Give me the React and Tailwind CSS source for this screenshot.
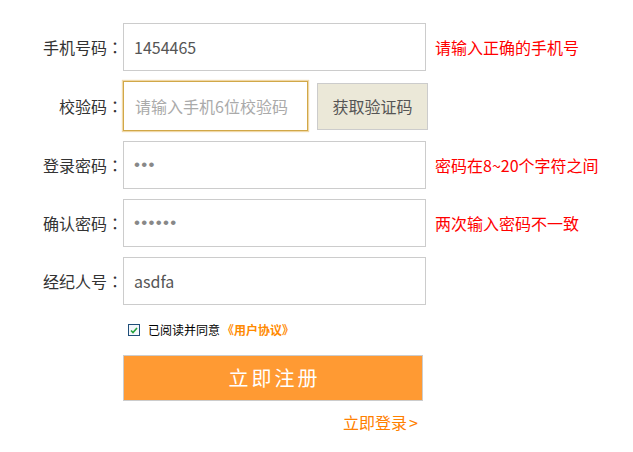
import React from 'react';

const FONT = { fontFamily: '"Microsoft YaHei", "Noto Sans CJK SC", "Liberation Sans", sans-serif' };
const DOTS = { fontFamily: '"Liberation Sans", Arial, sans-serif' };

function Row({ label, children, error }) {
    return (
        <div className="flex items-center">
            <label className="w-[123px] shrink-0 text-right text-[16px] text-[#333]">
                {label}<span className="font-['Noto_Sans_CJK_JP']">：</span>
            </label>
            {children}
            {error && <span className="ml-[9px] text-[16px] text-[#ff0000]">{error}</span>}
        </div>
    );
}

export default function App() {
    const input = "h-12 w-[303px] border border-[#cccccc] bg-white px-[10px] text-[16px] text-[#555] outline-none";

    return (
        <div className="w-[633px] h-[452px] bg-white pt-[23px]" style={FONT}>
            <div className="flex flex-col gap-[10px]">
                <Row label="手机号码" error="请输入正确的手机号">
                    <input className={input} defaultValue="1454465" style={FONT} />
                </Row>
                <Row label="校验码">
                    <input
                        className="h-[50px] w-[185px] border border-[#d1a848] bg-white px-[11px] text-[16px] text-[#555] outline-none shadow-[0_0_1px_1px_rgba(230,190,110,0.6)] placeholder:text-[#aaa]"
                        placeholder="请输入手机6位校验码"
                        style={FONT}
                    />
                    <button className="ml-[9px] h-[47px] w-[111px] border border-[#cccccc] bg-[#ebe8d8] text-[16px] text-[#555]" style={FONT}>获取验证码</button>
                </Row>
                <Row label="登录密码" error="密码在8~20个字符之间">
                    <input type="password" className={`${input} text-[17px] tracking-[1.3px] text-[#888]`} defaultValue="abc" style={DOTS} />
                </Row>
                <Row label="确认密码" error="两次输入密码不一致">
                    <input type="password" className={`${input} text-[17px] tracking-[1.3px] text-[#888]`} defaultValue="abcdef" style={DOTS} />
                </Row>
                <Row label="经纪人号">
                    <input className={input} defaultValue="asdfa" style={FONT} />
                </Row>
            </div>

            <div className="ml-[128px] mt-[16px] flex items-center">
                <span className="flex h-[12px] w-[12px] items-center justify-center border border-[#1f4e79] bg-[#f4f7fb]">
                    <svg width="8" height="7" viewBox="0 0 8 7"><path d="M1 3.5 L3 5.5 L7 1" fill="none" stroke="#22a13a" strokeWidth="1.6" /></svg>
                </span>
                <span className="ml-[8px] text-[12px] text-black">已阅读并同意</span>
                <span className="ml-[2px] text-[12px] font-bold text-[#ff8a00]">《用户协议》</span>
            </div>

            <button className="ml-[123px] mt-[16px] flex h-[46px] w-[300px] items-center justify-center border border-[#cccccc] bg-[#ff9a33] pl-[3px] text-[20px] tracking-[3px] text-white" style={FONT}>
                立即注册
            </button>

            <div className="mt-[9px] flex w-[418px] justify-end">
                <a className="text-[16px] text-[#ff8000]">立即登录<span className="ml-[2px]">&gt;</span></a>
            </div>
        </div>
    );
}
